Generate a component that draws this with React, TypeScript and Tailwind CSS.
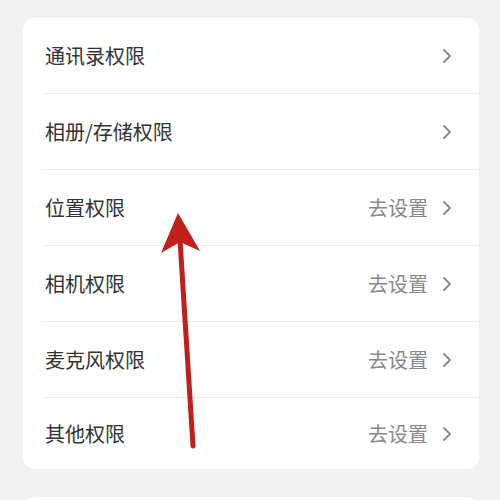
import React from 'react';

const rows = [
  { label: '通讯录权限', action: '' },
  { label: '相册/存储权限', action: '' },
  { label: '位置权限', action: '去设置' },
  { label: '相机权限', action: '去设置' },
  { label: '麦克风权限', action: '去设置' },
  { label: '其他权限', action: '去设置' },
];

function Chevron() {
  return (
    <svg width="10" height="16" viewBox="0 0 10 16" className="shrink-0">
      <polyline points="2,2 8,8 2,14" fill="none" stroke="#8a8a8a" strokeWidth="1.8" strokeLinecap="round" strokeLinejoin="round" />
    </svg>
  );
}

export default function App() {
  return (
    <div
      className="relative w-[500px] h-[500px] overflow-hidden bg-[#f1f1f1] pt-[18px] pl-[23px] pr-[21px]"
      style={{ fontFamily: '"Noto Sans CJK SC", "Noto Sans", sans-serif' }}
    >
      <div className="bg-white rounded-[12px]">
        {rows.map((row, i) => (
          <div key={i} className="pl-[20px]">
            <div
              className={`flex items-center pr-[27px] ${i < rows.length - 1 ? 'h-[76px] border-b border-[#ececec]' : 'h-[71px]'}`}
            >
              <span className="pl-[2px] text-[20px] text-[#333333] flex-1">{row.label}</span>
              {row.action && <span className="text-[20px] text-[#888888] mr-[14px]">{row.action}</span>}
              <Chevron />
            </div>
          </div>
        ))}
      </div>
      <div className="bg-white rounded-[12px] h-[40px] mt-[28px]" />

      {/* red arrow annotation */}
      <svg className="absolute left-0 top-0 pointer-events-none" width="500" height="500" viewBox="0 0 500 500">
        <line x1="193" y1="446" x2="180" y2="240" stroke="#c21f1c" strokeWidth="5" strokeLinecap="round" />
        <polygon points="178,213 161,253 180,242 200,251" fill="#c21f1c" />
      </svg>
    </div>
  );
}
